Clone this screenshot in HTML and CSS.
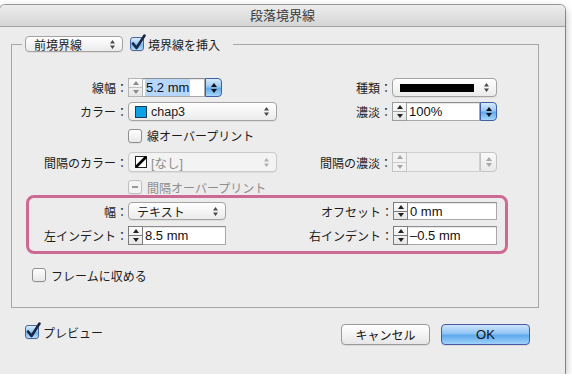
FILE: index.html
```html
<!DOCTYPE html>
<html lang="ja">
<head>
<meta charset="utf-8">
<title>段落境界線</title>
<link rel="stylesheet" href="styles.css">
</head>
<body>
<div class="window">
  <div class="titlebar">段落境界線</div>

  <fieldset class="group">
    <legend class="group-head">
      <span class="popup w-rule"><span>前境界線</span><svg class="ud" width="5" height="9" viewBox="0 0 5 9"><path d="M2.5 0L5 3.5H0Z M2.5 9L5 5.5H0Z"/></svg></span>
      <span class="check on"><svg class="tick" width="16" height="17" viewBox="0 0 16 17"><path d="M3 9.5 L6.5 14 L14.5 1.5"/></svg></span>
      <span class="check-label">境界線を挿入</span>
    </legend>

    <div class="rows">
      <div class="row r1">
        <span class="lbl l1">線幅：</span>
        <div class="ctl c1">
          <span class="stepper light"><i class="up"></i><i class="dn"></i></span>
          <span class="field w62"><span class="sel">5.2 mm</span></span>
          <span class="combo-btn"><i class="up"></i><i class="dn"></i></span>
        </div>
        <span class="lbl l2">種類：</span>
        <div class="ctl c2">
          <span class="popup w105"><span class="stroke-bar"></span><svg class="ud" width="5" height="9" viewBox="0 0 5 9"><path d="M2.5 0L5 3.5H0Z M2.5 9L5 5.5H0Z"/></svg></span>
        </div>
      </div>

      <div class="row r2">
        <span class="lbl l1">カラー：</span>
        <div class="ctl c1">
          <span class="popup w149"><span class="pop-val"><span class="swatch cyan"></span>chap3</span><svg class="ud" width="5" height="9" viewBox="0 0 5 9"><path d="M2.5 0L5 3.5H0Z M2.5 9L5 5.5H0Z"/></svg></span>
        </div>
        <span class="lbl l2">濃淡：</span>
        <div class="ctl c2">
          <span class="stepper"><i class="up"></i><i class="dn"></i></span>
          <span class="field w73">100%</span>
          <span class="combo-btn"><i class="up"></i><i class="dn"></i></span>
        </div>
      </div>

      <div class="row r3 indent">
        <span class="check"></span>
        <span class="check-label">線オーバープリント</span>
      </div>

      <div class="row r4">
        <span class="lbl l1">間隔のカラー：</span>
        <div class="ctl c1">
          <span class="popup w149 off"><span class="pop-val"><span class="swatch none"><svg width="12" height="12" viewBox="0 0 12 12"><path d="M1 11 L11 1"/></svg></span>[なし]</span><svg class="ud" width="5" height="9" viewBox="0 0 5 9"><path d="M2.5 0L5 3.5H0Z M2.5 9L5 5.5H0Z"/></svg></span>
        </div>
        <span class="lbl l2">間隔の濃淡：</span>
        <div class="ctl c2">
          <span class="stepper off"><i class="up"></i><i class="dn"></i></span>
          <span class="field w73 off"></span>
          <span class="combo-btn off"><i class="up"></i><i class="dn"></i></span>
        </div>
      </div>

      <div class="row r5 indent">
        <span class="check off mixed"></span>
        <span class="check-label off">間隔オーバープリント</span>
      </div>

      <div class="hl">
        <div class="row r6">
          <span class="lbl l1">幅：</span>
          <div class="ctl c1">
            <span class="popup w98"><span>テキスト</span><svg class="ud" width="5" height="9" viewBox="0 0 5 9"><path d="M2.5 0L5 3.5H0Z M2.5 9L5 5.5H0Z"/></svg></span>
          </div>
          <span class="lbl l2">オフセット：</span>
          <div class="ctl c2">
            <span class="stepper dark"><i class="up"></i><i class="dn"></i></span>
            <span class="field w89">0 mm</span>
          </div>
        </div>
        <div class="row r7">
          <span class="lbl l1">左インデント：</span>
          <div class="ctl c1">
            <span class="stepper dark"><i class="up"></i><i class="dn"></i></span>
            <span class="field w83">8.5 mm</span>
          </div>
          <span class="lbl l2">右インデント：</span>
          <div class="ctl c2">
            <span class="stepper dark"><i class="up"></i><i class="dn"></i></span>
            <span class="field w89">–0.5 mm</span>
          </div>
        </div>
      </div>

      <div class="row r8 fit">
        <span class="check"></span>
        <span class="check-label">フレームに収める</span>
      </div>
    </div>
  </fieldset>

  <div class="footer">
    <div class="preview">
      <span class="check on"><svg class="tick" width="16" height="17" viewBox="0 0 16 17"><path d="M3 9.5 L6.5 14 L14.5 1.5"/></svg></span>
      <span class="check-label">プレビュー</span>
    </div>
    <div class="buttons">
      <span class="btn">キャンセル</span>
      <span class="btn default">OK</span>
    </div>
  </div>
</div>
</body>
</html>
```

FILE: styles.css
```css
* { box-sizing: border-box; }
html, body { margin: 0; background: #ffffff; }
body {
  font-family: "Liberation Sans", "Noto Sans CJK JP", sans-serif;
  font-size: 12px;
  color: #1c1c1c;
}

.window {
  width: 565px;
  height: 369px;
  margin-top: 5px;
  background: #ececec;
  border-radius: 5px 5px 0 0;
  box-shadow: 0 0 0 1px rgba(0,0,0,0.38), 0 4px 10px rgba(0,0,0,0.35);
  display: flex;
  flex-direction: column;
}

.titlebar {
  height: 22px;
  line-height: 21px;
  text-align: center;
  font-size: 13px;
  color: #3a3a3a;
  background: linear-gradient(#ededed, #d5d5d5);
  border-bottom: 1px solid #a2a2a2;
  border-radius: 5px 5px 0 0;
}

/* group box */
.group {
  margin: 9px 0 0 11px;
  width: 528px;
  height: 272px;
  padding: 0;
  border: 1px solid #a7a7a7;
  min-width: 0;
}
.group-head {
  margin-left: 10px;
  padding: 0 13px 0 3px;
  height: 16px;
  display: flex;
  align-items: center;
}
.group-head .check { margin-left: 7px; }
.group-head .check-label { margin-left: 4px; font-size: 12px; }

.rows { padding-top: 26px; }

.row {
  display: flex;
  align-items: center;
  height: 19px;
}
.lbl {
  flex: none;
  text-align: right;
  white-space: nowrap;
  color: #1c1c1c;
}
.l1 { width: 116px; }
.l2 { width: 115px; }
.ctl { display: flex; height: 100%; align-items: stretch; }
.c1 { width: 149px; flex: none; }
.c2 { flex: none; }

.r2 { margin-top: 5px; }
.r3 { margin-top: 7px; height: 15px; }
.r4 { margin-top: 9px; height: 20px; }
.r5 { margin-top: 8px; height: 14px; }
.indent { padding-left: 116px; }
.indent .check-label { margin-left: 5px; }

/* highlighted section */
.hl {
  margin: 1px 0 0 14px;
  width: 482px;
  border: 3px solid #cd6a93;
  border-radius: 8px;
  padding: 4px 0 6px 0;
}
.hl .l1 { width: 99px; }
.hl .l2 { width: 116px; }
.r6 { height: 18px; }
.r7 { margin-top: 6px; height: 19px; }

.fit { margin-top: 14px; height: 14px; padding-left: 20px; }
.fit .check-label { margin-left: 5px; }

/* popup menu */
.popup {
  display: flex;
  align-items: center;
  justify-content: space-between;
  height: 100%;
  padding: 0 7px 0 6px;
  border: 1px solid #a3a3a3;
  border-radius: 4px;
  background: linear-gradient(#ffffff, #f5f5f5 50%, #ebebeb);
  box-shadow: 0 1px 0 rgba(0,0,0,0.06);
  white-space: nowrap;
}
.popup .ud { fill: #4a4a4a; flex: none; }
.popup.off { border-color: #c9c9c9; color: #8c8c8c; background: #f3f3f3; }
.popup.off .ud { fill: #b0b0b0; }
.w-rule { width: 98px; height: 16px; padding-left: 8px; }
.w105 { width: 105px; }
.w149 { width: 149px; }
.w98 { width: 98px; padding-left: 8px; }

.pop-val { display: flex; align-items: center; font-size: 12.5px; }
.stroke-bar { width: 74px; height: 8px; background: #000; margin-left: 1px; }

.swatch { width: 12px; height: 12px; margin-right: 4px; flex: none; }
.swatch.cyan { background: #0aa2e4; border: 1px solid #1d3f56; }
.swatch.none { background: #fff; border: 1px solid #222; position: relative; }
.swatch.none svg { display: block; margin: -1px; stroke: #000; stroke-width: 2.6; }

/* stepper */
.stepper {
  width: 15px;
  flex: none;
  display: flex;
  flex-direction: column;
  border: 1px solid #9c9c9c;
  background: linear-gradient(#fbfbfb, #e6e6e6);
}
.stepper i { flex: 1; display: flex; align-items: center; justify-content: center; }
.stepper .dn { border-top: 1px solid #a5a5a5; }
.stepper .up::before {
  content: "";
  border-left: 3.5px solid transparent;
  border-right: 3.5px solid transparent;
  border-bottom: 4px solid #222;
}
.stepper .dn::before {
  content: "";
  border-left: 3.5px solid transparent;
  border-right: 3.5px solid transparent;
  border-top: 4px solid #222;
}
.stepper.light { border-color: #b4b4b4; }
.stepper.light .dn { border-top-color: #c2c2c2; }
.stepper.light .up::before { border-bottom-color: #8a8a8a; }
.stepper.light .dn::before { border-top-color: #8a8a8a; }
.stepper.off { border-color: #c4c4c4; background: #f2f2f2; }
.stepper.off .dn { border-top-color: #cccccc; }
.stepper.off .up::before { border-bottom-color: #a6a6a6; }
.stepper.off .dn::before { border-top-color: #a6a6a6; }
.stepper.dark { border-color: #7d7d7d; }
.stepper.dark .dn { border-top-color: #7d7d7d; }

/* text field */
.field {
  flex: none;
  display: flex;
  align-items: center;
  padding-left: 2px;
  background: #fff;
  border: 1px solid #a8a8a8;
  border-top-color: #8e8e8e;
  border-left: none;
  box-shadow: inset 0 1px 1px rgba(0,0,0,0.10);
  font-size: 13px;
  color: #111;
  white-space: nowrap;
}
.field.off { background: #efefef; border-color: #cfcfcf; box-shadow: none; }
.w62 { width: 62px; }
.w73 { width: 73px; }
.w83 { width: 83px; }
.w89 { width: 89px; }
.sel { background: #b6d6fc; padding: 1px 1px; }

/* blue combo button */
.combo-btn {
  width: 17px;
  flex: none;
  display: flex;
  flex-direction: column;
  justify-content: center;
  align-items: center;
  gap: 2px;
  border: 1px solid #3d5fa6;
  border-radius: 0 4px 4px 0;
  background: linear-gradient(#d6eafc 0%, #98c9f3 45%, #62abec 55%, #a7d6fb 100%);
}
.combo-btn i { display: block; width: 0; height: 0; }
.combo-btn .up {
  border-left: 3px solid transparent;
  border-right: 3px solid transparent;
  border-bottom: 4px solid #111;
}
.combo-btn .dn {
  border-left: 3px solid transparent;
  border-right: 3px solid transparent;
  border-top: 4px solid #111;
}
.combo-btn.off { border-color: #c4c4c4; background: linear-gradient(#f9f9f9, #e9e9e9); }
.combo-btn.off .up { border-bottom-color: #a8a8a8; }
.combo-btn.off .dn { border-top-color: #a8a8a8; }

/* checkbox */
.check {
  position: relative;
  flex: none;
  width: 14px;
  height: 14px;
  border: 1px solid #8f8f8f;
  border-radius: 3px;
  background: linear-gradient(#ffffff, #e8e8e8);
  box-shadow: 0 1px 0 rgba(0,0,0,0.05);
}
.check.on {
  border-color: #45679e;
  background: linear-gradient(#d9ecfc 0%, #9ccdf5 45%, #6fb4ee 55%, #b5dcfa 100%);
}
.check .tick {
  position: absolute;
  left: -1px;
  top: -4px;
  fill: none;
  stroke: #1b2740;
  stroke-width: 2.6;
  stroke-linecap: round;
  stroke-linejoin: round;
}
.check.off { border-color: #c0c0c0; background: #f4f4f4; }
.check.mixed::after {
  content: "";
  position: absolute;
  left: 3px;
  top: 5px;
  width: 6px;
  height: 2px;
  background: #9a9a9a;
}
.check-label { white-space: nowrap; }
.check-label.off { color: #8e8e8e; }

/* footer */
.footer {
  margin-top: 16px;
  padding: 0 35px 0 25px;
  display: flex;
  justify-content: space-between;
  align-items: flex-start;
}
.preview { display: flex; align-items: center; height: 16px; }
.preview .check-label { margin-left: 4px; }
.buttons { display: flex; gap: 11px; }
.btn {
  width: 89px;
  height: 21px;
  display: flex;
  align-items: center;
  justify-content: center;
  border: 1px solid #9a9a9a;
  border-radius: 4px;
  background: linear-gradient(#ffffff, #f3f3f3 50%, #e6e6e6);
  box-shadow: 0 1px 0 rgba(0,0,0,0.08);
  font-size: 12px;
  color: #111;
}
.btn.default {
  border-color: #4a58a6;
  background: linear-gradient(#cfe5fb 0%, #8fc3f3 45%, #5ea8ec 55%, #a0d3fb 100%);
  font-size: 13px;
}
```
